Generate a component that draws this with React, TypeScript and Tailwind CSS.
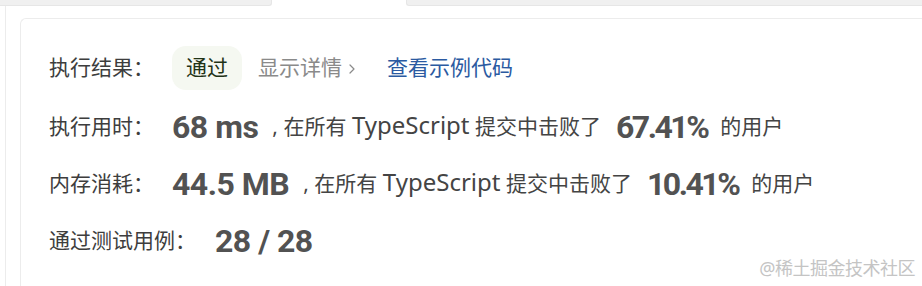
import { ChevronRight } from 'lucide-react';

const cjk = "font-['Noto_Sans','Noto_Sans_CJK_SC',sans-serif]";
const num = "font-['Roboto','Liberation_Sans',sans-serif] font-bold text-[32px] text-[#525252]";

function Stat({ label, value, rate }: { label: string; value: string; rate: string }) {
  return (
    <div className="flex items-center h-[57px]">
      <span className="w-[123px] text-[21px] text-[#3d3d3d]">{label}</span>
      <span className={`${num} tracking-[-0.5px]`}>{value}</span>
      <span className="ml-[14px] text-[21px] text-[#444]">
        , 在所有 <span className="text-[24px] leading-none">TypeScript</span> 提交中击败了
      </span>
      <span className={`${num} ml-[15px] tracking-[-2.5px]`}>{rate}</span>
      <span className="ml-[13px] text-[21px] text-[#444]">的用户</span>
    </div>
  );
}

export default function App() {
  return (
    <div className={`w-[922px] h-[286px] overflow-hidden bg-white ${cjk}`}>
      {/* tabs strip */}
      <div className="flex h-[6px]">
        <div className="w-[272px] bg-[#f0f0f0] border-b border-r border-[#e6e6e6] rounded-br-[3px]" />
        <div className="w-[134px] bg-white" />
        <div className="flex-1 bg-[#f0f0f0] border-b border-l border-[#e6e6e6] rounded-bl-[3px]" />
      </div>
      <div className="ml-[5px] border-l border-[#ececec] h-[280px] pt-[12px] pl-[14px]">
        <div className="border-t border-l border-[#ececec] rounded-tl-[6px] h-[300px] pl-[28px] pt-[25px]">
          <div className="flex items-center h-[48px]">
            <span className="w-[123px] text-[21px] text-[#3d3d3d]">执行结果：</span>
            <span className="h-[44px] px-[14px] flex items-center rounded-[14px] bg-[#f5f8f1] text-[21px] text-[#1f3317]">
              通过
            </span>
            <span className="ml-[16px] flex items-center text-[21px] text-[#8a8a8a]">
              显示详情
              <ChevronRight size={16} strokeWidth={1.8} className="ml-[2px] mt-[2px]" />
            </span>
            <span className="ml-[27px] text-[21px] text-[#2b5aa1]">查看示例代码</span>
          </div>
          <div className="mt-[6px]">
            <Stat label="执行用时：" value="68 ms" rate="67.41%" />
            <Stat label="内存消耗：" value="44.5 MB" rate="10.41%" />
            <div className="flex items-center h-[57px]">
              <span className="w-[166px] text-[21px] text-[#3d3d3d]">通过测试用例：</span>
              <span className={`${num} tracking-[-0.5px]`}>28 / 28</span>
            </div>
            <div className="flex items-center h-[70px] relative">
              <span className="mt-[8px] text-[21px] text-[#3d3d3d]">备注：</span>
              <span className="absolute right-[7px] -top-[14px] text-[18px] text-[#c4c4c4] tracking-[-0.5px]">
                @稀土掘金技术社区
              </span>
            </div>
          </div>
        </div>
      </div>
    </div>
  );
}
